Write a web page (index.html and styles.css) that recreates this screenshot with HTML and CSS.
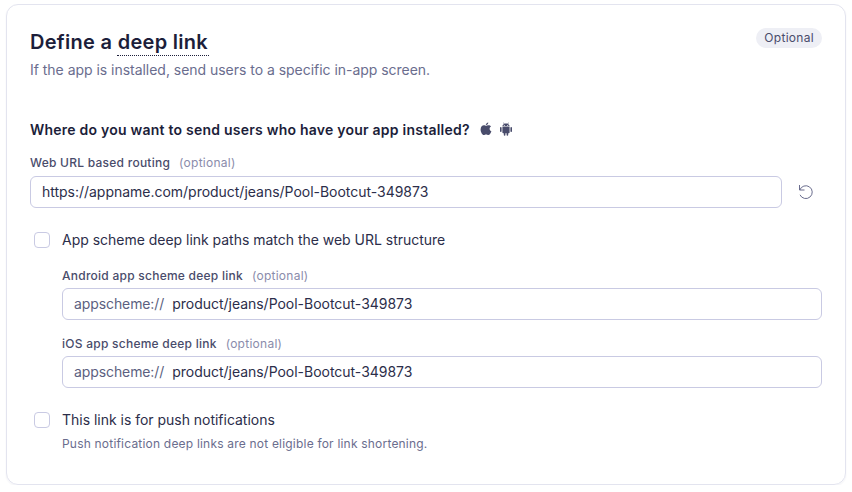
FILE: index.html
```html
<!DOCTYPE html>
<html lang="en">
<head>
<meta charset="utf-8">
<title>Define a deep link</title>
<link rel="stylesheet" href="styles.css">
</head>
<body>
<section class="card">
  <header class="card-head">
    <div>
      <h1 class="title">Define a <span class="term">deep link</span></h1>
      <p class="subtitle">If the app is installed, send users to a specific in-app screen.</p>
    </div>
    <span class="badge">Optional</span>
  </header>

  <div class="question">
    <span>Where do you want to send users who have your app installed?</span>
    <svg class="os-icon" viewBox="0 0 14 14" aria-hidden="true"><path d="M9.300 0.600c.1 1-.9 2.600-2.500 2.600C6.700 2 7.900.7 9.300.6zM7 3.800c.7 0 1.400-.6 2.600-.6 1 0 1.900.5 2.400 1.300-2 1.100-1.700 4 .4 4.800-.5 1.500-1.700 3.800-3 3.800-.9 0-1.300-.6-2.300-.6-1.100 0-1.400.6-2.300.6C3.300 13.100 1.600 10 1.600 7.500c0-2.700 1.700-4.200 3.300-4.200 1 0 1.600.5 2.100.5z"/></svg>
    <svg class="os-icon" viewBox="0 0 14 14" aria-hidden="true"><path d="M4.200.8l.4-.3.9 1.300c1-.4 2-.4 3 0l.9-1.300.4.300-.8 1.300c.9.5 1.500 1.300 1.600 2.300H3.400c.1-1 .7-1.800 1.600-2.300zM5.300 3a.5.500 0 1 0 0 1 .5.500 0 0 0 0-1zm3.400 0a.5.500 0 1 0 0 1 .5.500 0 0 0 0-1zM3.400 5h7.200v5.500c0 .5-.3.800-.8.800h-.6v1.700a.8.800 0 0 1-1.600 0v-1.700H6.400v1.700a.8.800 0 0 1-1.600 0v-1.700h-.6c-.5 0-.8-.3-.8-.8zM1.800 5c.4 0 .8.300.8.800v3.500a.8.800 0 0 1-1.600 0V5.800c0-.5.400-.8.800-.8zM12.200 5c.4 0 .8.300.8.800v3.500a.8.800 0 0 1-1.600 0V5.800c0-.5.400-.8.800-.8z"/></svg>
  </div>

  <label class="label">Web URL based routing <span class="opt">(optional)</span></label>
  <div class="url-row">
    <div class="field">https://appname.com/product/jeans/Pool-Bootcut-349873</div>
    <svg class="reset" viewBox="0 0 16 16" aria-hidden="true"><path d="M1.500 1v5h5M1.800 6A6.400 6.400 0 1 1 2 10.800"/></svg>
  </div>

  <div class="check-row first-check">
    <span class="box"></span>
    <span class="check-text">App scheme deep link paths match the web URL structure</span>
  </div>

  <div class="nested">
    <label class="label">Android app scheme deep link <span class="opt">(optional)</span></label>
    <div class="field"><span class="prefix">appscheme://</span>product/jeans/Pool-Bootcut-349873</div>
    <label class="label second">iOS app scheme deep link <span class="opt">(optional)</span></label>
    <div class="field"><span class="prefix">appscheme://</span>product/jeans/Pool-Bootcut-349873</div>
  </div>

  <div class="check-row push-check">
    <span class="box"></span>
    <span class="check-text">This link is for push notifications</span>
  </div>
  <p class="hint">Push notification deep links are not eligible for link shortening.</p>
</section>
</body>
</html>
```
FILE: styles.css
```css
* { box-sizing: border-box; }
html, body { margin: 0; background: #fff; }
body {
  padding: 4px 6px 0;
  font-family: Inter, "Liberation Sans", sans-serif;
  color: #1c1e3a;
}
.card {
  height: 481px;
  border: 1px solid #e3e4ef;
  border-radius: 12px;
  padding: 23px 23px 0;
  box-shadow: 0 1px 2px rgba(30, 32, 80, 0.06);
}
.card-head { display: flex; justify-content: space-between; align-items: flex-start; }
.title { margin: 0; font-size: 20px; line-height: 28px; font-weight: 600; letter-spacing: 0.29px; color: #1c1e3a; }
.term { border-bottom: 1px dotted #1c1e3a; padding: 0 1px 1px; margin-left: -1px; }
.subtitle { margin: 4px 0 0; font-size: 14px; line-height: 20px; letter-spacing: -0.03px; color: #6a6d8e; }
.badge {
  display: block;
  padding: 0 8px;
  height: 20px;
  line-height: 20px;
  border-radius: 10px;
  background: #eeeff5;
  font-size: 12px;
  letter-spacing: 0.3px;
  color: #494c6b;
}
.question {
  display: flex;
  align-items: center;
  margin-top: 39px;
  height: 20px;
  font-size: 14px;
  font-weight: 600;
  letter-spacing: 0.23px;
  color: #1c1e3a;
}
.os-icon { width: 14px; height: 14px; fill: #494c6b; margin-left: 6px; }
.os-icon:first-of-type { margin-left: 9px; }
.label {
  display: block;
  margin-top: 15px;
  height: 18px;
  line-height: 18px;
  font-size: 12px;
  font-weight: 500;
  color: #494c6b;
  letter-spacing: 0.25px;
}
.opt { margin-left: 5.5px; font-weight: 400; letter-spacing: 0.26px; color: #8a8cab; }
.url-row { display: flex; align-items: center; margin-top: 4px; }
.url-row .field { flex: 1; }
.field {
  height: 32px;
  line-height: 30px;
  padding: 0 11px;
  border: 1px solid #c9cae3;
  border-radius: 6px;
  font-size: 14px;
  letter-spacing: -0.02px;
  color: #2c2e4a;
  background: #fff;
}
.reset {
  width: 16px;
  height: 16px;
  margin: 0 8px 0 16px;
  fill: none;
  stroke: #6a6d8e;
  stroke-width: 1;
}
.check-row { display: flex; align-items: center; gap: 12px; height: 20px; padding-left: 4px; font-size: 14px; letter-spacing: -0.02px; color: #2c2e4a; }
.check-text { margin-top: -1px; }
.first-check { margin-top: 22px; }
.box { width: 16px; height: 16px; border: 1px solid #c9cae3; border-radius: 4px; background: #fff; }
.nested { padding-left: 32px; margin-top: 17px; }
.nested .label { margin-top: 0; }
.nested .field { margin-top: 3px; }
.nested .label.second { margin-top: 15px; }
.prefix { margin-right: 8px; letter-spacing: -0.1px; color: #5c5f80; }
.push-check { margin-top: 22px; }
.hint { margin: 5px 0 0 32px; font-size: 12px; line-height: 18px; color: #6a6d8e; letter-spacing: 0.2px; }
```
